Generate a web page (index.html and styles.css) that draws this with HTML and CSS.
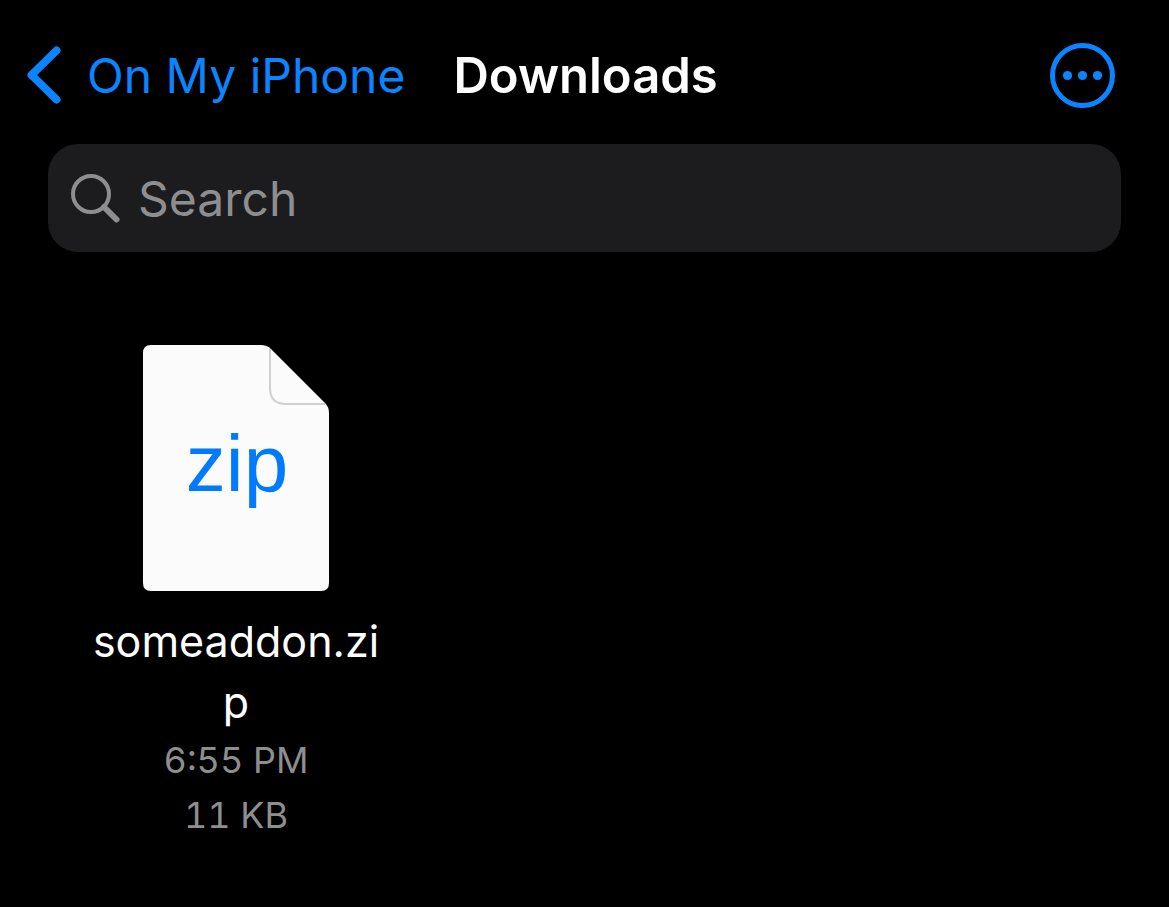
FILE: index.html
```html
<!DOCTYPE html>
<html lang="en">
<head>
    <meta charset="UTF-8">
    <meta name="viewport" content="width=device-width, initial-scale=1.0">
    <title>Downloads</title>
    <link rel="stylesheet" href="styles.css">
</head>
<body>
    <header class="navbar">
        <a href="#" class="back">
            <svg class="chevron" viewBox="0 0 40 60" aria-hidden="true">
                <path d="M32.5 4.5 L7.5 29 L32.5 53.5"/>
            </svg>
            <span>On My iPhone</span>
        </a>
        <h1 class="title">Downloads</h1>
        <button type="button" class="more" aria-label="More options">
            <svg viewBox="0 0 66 66" aria-hidden="true">
                <circle class="ring" cx="33.5" cy="32.5" r="30"/>
                <circle cx="18.5" cy="32.5" r="4.6"/>
                <circle cx="33.5" cy="32.5" r="4.6"/>
                <circle cx="48.5" cy="32.5" r="4.6"/>
            </svg>
        </button>
    </header>

    <main>
        <form class="search">
            <svg class="search-icon" viewBox="0 0 50 50" aria-hidden="true">
                <circle cx="21" cy="21" r="18"/>
                <path class="handle" d="M34 34 L46.5 46.5"/>
            </svg>
            <input type="search" placeholder="Search" aria-label="Search">
        </form>

        <ul class="files">
            <li class="file">
                <svg class="file-icon" viewBox="0 0 186 246" aria-hidden="true">
                    <path class="page" d="M8 0 H118 Q124 0 128 4 L182 58 Q186 62 186 68 V238 Q186 246 178 246 H8 Q0 246 0 238 V8 Q0 0 8 0 Z"/>
                    <path class="fold" d="M127 4 V43 Q127 59 143 59 H182"/>
                    <text class="ext" x="94" y="146">zip</text>
                </svg>
                <span class="name">someaddon.zip</span>
                <span class="meta">6:55 PM</span>
                <span class="meta">11 KB</span>
            </li>
        </ul>
    </main>
</body>
</html>
```
FILE: styles.css
```css
* {
    box-sizing: border-box;
}

body {
    margin: 0;
    background: #000;
    color: #fff;
    font-family: Inter, "Liberation Sans", sans-serif;
}

.navbar {
    display: flex;
    align-items: center;
    padding: 40px 54px 32px 24px;
}

.back {
    display: flex;
    align-items: center;
    gap: 23px;
    color: #0a84ff;
    font-size: 48px;
    line-height: 72px;
    text-decoration: none;
}

.chevron {
    width: 40px;
    height: 60px;
    fill: none;
    stroke: #0a84ff;
    stroke-width: 8;
    stroke-linecap: round;
    stroke-linejoin: round;
}

.title {
    margin: 0 0 0 48px;
    font-size: 49px;
    font-weight: 600;
    line-height: 72px;
}

.more {
    width: 66px;
    height: 66px;
    margin-left: auto;
    padding: 0;
    border: none;
    background: none;
}

.more svg {
    display: block;
    fill: #0a84ff;
}

.more .ring {
    fill: none;
    stroke: #0a84ff;
    stroke-width: 5;
}

.search {
    display: flex;
    align-items: center;
    gap: 18px;
    height: 108px;
    margin: 0 48px;
    padding: 0 22px;
    border-radius: 30px;
    background: #1c1c1e;
}

.search-icon {
    width: 50px;
    height: 50px;
    fill: none;
    stroke: #8e8e90;
    stroke-width: 4;
    stroke-linecap: round;
}

.handle {
    stroke-width: 6;
}

.search input {
    flex: 1;
    padding: 0;
    border: none;
    outline: none;
    background: none;
    color: #fff;
    font: inherit;
    font-size: 48px;
}

.search input::placeholder {
    color: #8e8e90;
}

.files {
    display: flex;
    flex-wrap: wrap;
    margin: 0;
    padding: 93px 86px;
    list-style: none;
}

.file {
    display: flex;
    flex-direction: column;
    align-items: center;
    width: 300px;
    text-align: center;
}

.file-icon {
    width: 186px;
    height: 246px;
    margin-bottom: 20px;
}

.page {
    fill: #fbfbfb;
}

.fold {
    fill: none;
    stroke: #d0d0d2;
    stroke-width: 2;
}

.ext {
    fill: #007aff;
    font-family: "Liberation Sans", Arial, sans-serif;
    font-size: 80px;
    text-anchor: middle;
}

.name {
    max-width: 288px;
    font-size: 43px;
    line-height: 61px;
    word-break: break-all;
}

.meta {
    color: #8e8e8e;
    font-size: 36px;
    font-variant-numeric: tabular-nums;
    line-height: 55px;
}
```
